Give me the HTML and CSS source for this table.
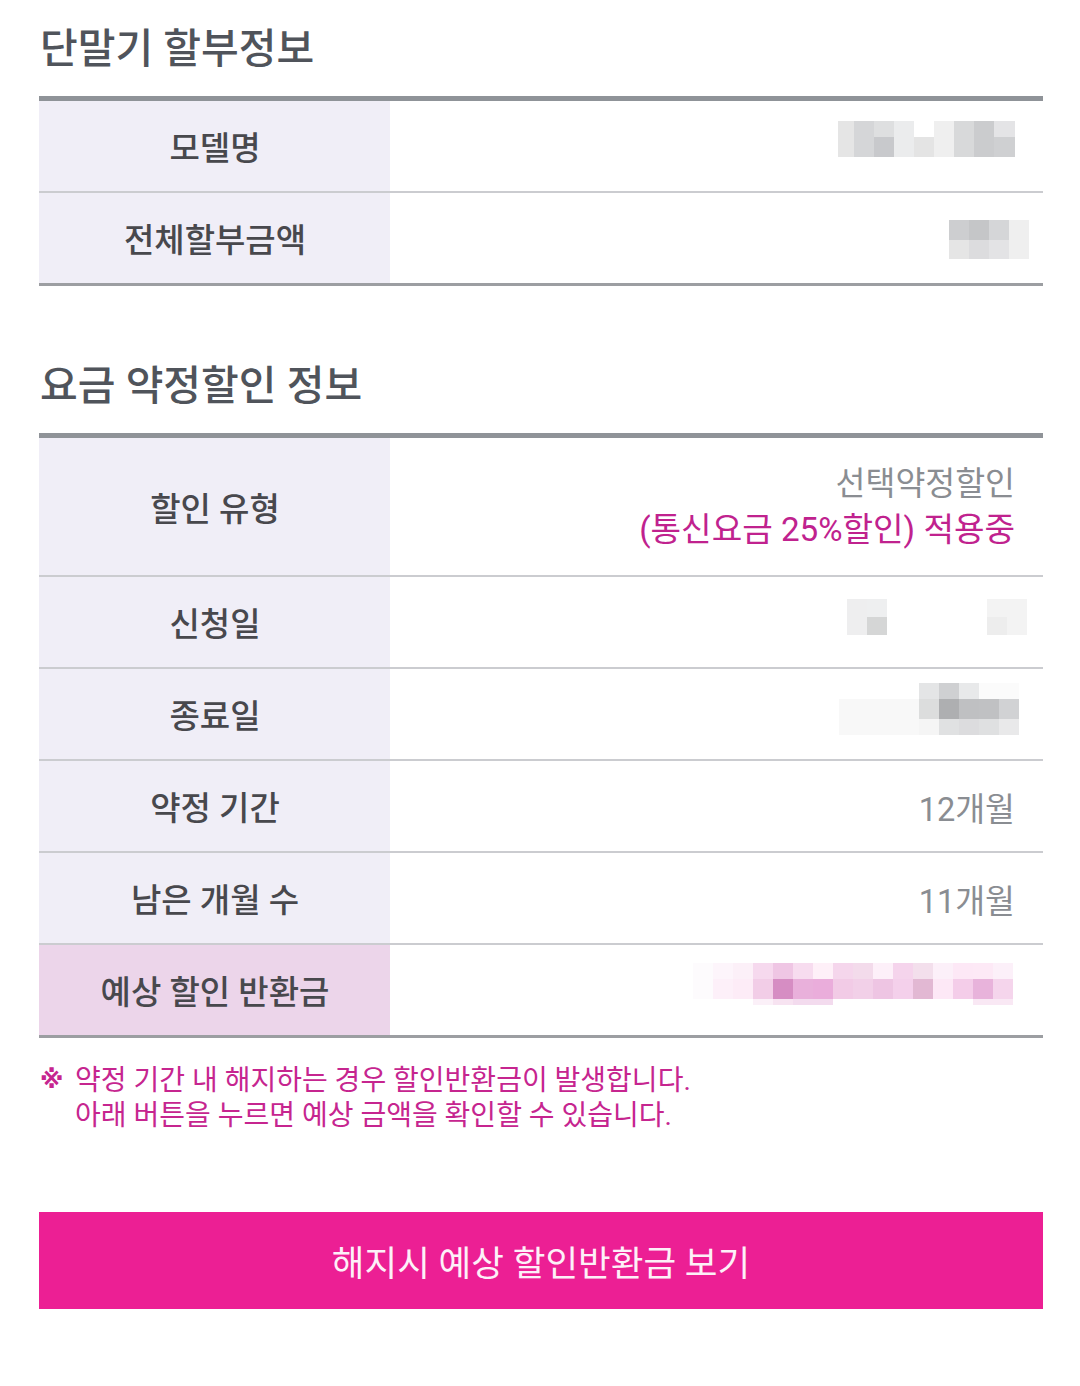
FILE: index.html
```html
<!DOCTYPE html>
<html lang="ko">
<head>
<meta charset="utf-8">
<title>약정 정보</title>
<link rel="stylesheet" href="styles.css">
</head>
<body>
<main class="page">
  <section class="section">
    <h2 class="section-title">단말기 할부정보</h2>
    <div class="info-table">
      <div class="row">
        <div class="label">모델명</div>
        <div class="value value--blob">
          <svg class="blob" width="205" height="90" viewBox="0 0 205 90" shape-rendering="crispEdges" aria-hidden="true">
            <rect x="0" y="20" width="16" height="36" fill="#e5e5e5"/>
            <rect x="16" y="20" width="20" height="36" fill="#d5d6d8"/>
            <rect x="36" y="20" width="20" height="16" fill="#dedfe0"/>
            <rect x="36" y="36" width="20" height="20" fill="#c8c9cc"/>
            <rect x="56" y="20" width="20" height="36" fill="#ebeced"/>
            <rect x="76" y="36" width="20" height="20" fill="#e4e4e4"/>
            <rect x="96" y="20" width="20" height="36" fill="#efefef"/>
            <rect x="116" y="20" width="20" height="36" fill="#d8d9da"/>
            <rect x="136" y="20" width="20" height="36" fill="#cbccce"/>
            <rect x="156" y="20" width="21" height="16" fill="#e4e4e6"/>
            <rect x="156" y="36" width="21" height="20" fill="#cfd0d2"/>
          </svg>
        </div>
      </div>
      <div class="row">
        <div class="label">전체할부금액</div>
        <div class="value value--blob">
          <svg class="blob" width="94" height="90" viewBox="0 0 94 90" shape-rendering="crispEdges" aria-hidden="true">
            <rect x="0" y="27" width="20" height="20" fill="#cdced0"/>
            <rect x="20" y="27" width="20" height="20" fill="#c5c6c8"/>
            <rect x="40" y="27" width="20" height="20" fill="#d5d6d8"/>
            <rect x="60" y="27" width="20" height="39" fill="#efefef"/>
            <rect x="0" y="47" width="20" height="19" fill="#e5e5e5"/>
            <rect x="20" y="47" width="20" height="19" fill="#dcdcde"/>
            <rect x="40" y="47" width="20" height="19" fill="#e3e3e5"/>
          </svg>
        </div>
      </div>
    </div>
  </section>

  <section class="section section--second">
    <h2 class="section-title">요금 약정할인 정보</h2>
    <div class="info-table">
      <div class="row row--tall">
        <div class="label">할인 유형</div>
        <div class="value">
          <div class="value-lines">
            <span>선택약정할인</span>
            <span class="accent">(통신요금 25%할인) 적용중</span>
          </div>
        </div>
      </div>
      <div class="row">
        <div class="label">신청일</div>
        <div class="value value--blob">
          <svg class="blob" width="196" height="90" viewBox="0 0 196 90" shape-rendering="crispEdges" aria-hidden="true">
            <rect x="0" y="22" width="20" height="36" fill="#eeeeef"/>
            <rect x="20" y="22" width="20" height="18" fill="#eeeff0"/>
            <rect x="20" y="40" width="20" height="18" fill="#d5d6d6"/>
            <rect x="140" y="22" width="40" height="36" fill="#f3f3f3"/>
            <rect x="140" y="40" width="20" height="18" fill="#ededed"/>
          </svg>
        </div>
      </div>
      <div class="row">
        <div class="label">종료일</div>
        <div class="value value--blob">
          <svg class="blob" width="204" height="90" viewBox="0 0 204 90" shape-rendering="crispEdges" aria-hidden="true">
            <rect x="80" y="14" width="20" height="16" fill="#e4e5e6"/>
            <rect x="100" y="14" width="20" height="16" fill="#cfd0d2"/>
            <rect x="120" y="14" width="20" height="16" fill="#e8e9ea"/>
            <rect x="140" y="14" width="40" height="16" fill="#fbfbfb"/>
            <rect x="0" y="30" width="80" height="36" fill="#f8f8f8"/>
            <rect x="80" y="30" width="20" height="20" fill="#dcdddd"/>
            <rect x="100" y="30" width="20" height="20" fill="#aeafb1"/>
            <rect x="120" y="30" width="20" height="20" fill="#bfc0c2"/>
            <rect x="140" y="30" width="20" height="20" fill="#c0c1c3"/>
            <rect x="160" y="30" width="20" height="20" fill="#d1d2d4"/>
            <rect x="80" y="50" width="20" height="16" fill="#f5f5f5"/>
            <rect x="100" y="50" width="20" height="16" fill="#e0e1e2"/>
            <rect x="120" y="50" width="20" height="16" fill="#dcdcde"/>
            <rect x="140" y="50" width="20" height="16" fill="#dfe0e1"/>
            <rect x="160" y="50" width="20" height="16" fill="#e9e9ea"/>
          </svg>
        </div>
      </div>
      <div class="row">
        <div class="label">약정 기간</div>
        <div class="value">12개월</div>
      </div>
      <div class="row">
        <div class="label">남은 개월 수</div>
        <div class="value">11개월</div>
      </div>
      <div class="row row--highlight">
        <div class="label">예상 할인 반환금</div>
        <div class="value value--blob">
          <svg class="blob" width="350" height="90" viewBox="0 0 350 90" shape-rendering="crispEdges" aria-hidden="true">
            <rect x="0" y="18" width="20" height="16" fill="#fdfbfd"/>
            <rect x="20" y="18" width="20" height="16" fill="#fdf5fb"/>
            <rect x="40" y="18" width="20" height="16" fill="#fcf0f8"/>
            <rect x="60" y="18" width="20" height="16" fill="#f6d9ee"/>
            <rect x="80" y="18" width="20" height="16" fill="#efc6e4"/>
            <rect x="100" y="18" width="20" height="16" fill="#f7dcef"/>
            <rect x="120" y="18" width="20" height="16" fill="#fef0f8"/>
            <rect x="140" y="18" width="20" height="16" fill="#f5d6ec"/>
            <rect x="160" y="18" width="20" height="16" fill="#f3dbeb"/>
            <rect x="180" y="18" width="20" height="16" fill="#fdf0f9"/>
            <rect x="200" y="18" width="20" height="16" fill="#f5d4ec"/>
            <rect x="220" y="18" width="20" height="16" fill="#f3dfec"/>
            <rect x="240" y="18" width="20" height="16" fill="#fcf0f9"/>
            <rect x="260" y="18" width="20" height="16" fill="#fde8f6"/>
            <rect x="280" y="18" width="20" height="16" fill="#fde9f6"/>
            <rect x="300" y="18" width="20" height="16" fill="#fcf0f9"/>
            <rect x="0" y="34" width="20" height="20" fill="#fdfbfd"/>
            <rect x="20" y="34" width="20" height="20" fill="#fdf0f9"/>
            <rect x="40" y="34" width="20" height="20" fill="#fdecf7"/>
            <rect x="60" y="34" width="20" height="20" fill="#f2cde7"/>
            <rect x="80" y="34" width="20" height="20" fill="#d68dc3"/>
            <rect x="100" y="34" width="20" height="20" fill="#e9b0db"/>
            <rect x="120" y="34" width="20" height="20" fill="#eaaddb"/>
            <rect x="140" y="34" width="20" height="20" fill="#f2cbe6"/>
            <rect x="160" y="34" width="20" height="20" fill="#f2d0e8"/>
            <rect x="180" y="34" width="20" height="20" fill="#eec5e3"/>
            <rect x="200" y="34" width="20" height="20" fill="#f4d0eb"/>
            <rect x="220" y="34" width="20" height="20" fill="#e2b8d3"/>
            <rect x="240" y="34" width="20" height="20" fill="#fde8f6"/>
            <rect x="260" y="34" width="20" height="20" fill="#f4cde9"/>
            <rect x="280" y="34" width="20" height="20" fill="#e8b3db"/>
            <rect x="300" y="34" width="20" height="20" fill="#f5d5ec"/>
            <rect x="60" y="54" width="20" height="6" fill="#fbf0f8"/>
            <rect x="80" y="54" width="20" height="6" fill="#f7e3f1"/>
            <rect x="100" y="54" width="40" height="6" fill="#f3dbee"/>
            <rect x="280" y="54" width="40" height="6" fill="#f9e8f4"/>
          </svg>
        </div>
      </div>
    </div>
  </section>

  <div class="notice">
    <span class="notice-mark">※</span>
    <p class="notice-text">약정 기간 내 해지하는 경우 할인반환금이 발생합니다.<br>아래 버튼을 누르면 예상 금액을 확인할 수 있습니다.</p>
  </div>

  <button class="cta" type="button">해지시 예상 할인반환금 보기</button>
</main>
</body>
</html>
```

FILE: styles.css
```css
* {
  box-sizing: border-box;
}

html, body {
  margin: 0;
  padding: 0;
  background: #ffffff;
}

body {
  font-family: Roboto, "Noto Sans CJK KR", sans-serif;
  color: #4a4a4f;
}

.page {
  width: 1080px;
  padding: 25px 37px 60px 39px;
  display: flex;
  flex-direction: column;
}

.section-title {
  margin: 0 0 23px;
  font-size: 41px;
  line-height: 48px;
  font-weight: 500;
  color: #50545b;
  padding-left: 1px;
}

.section--second {
  margin-top: 76px;
}

.info-table {
  border-top: 5px solid #8f9398;
  border-bottom: 3px solid #9c9ea2;
}

.row {
  display: grid;
  grid-template-columns: 351px 1fr;
  height: 90px;
}

.row + .row {
  border-top: 2px solid #cbccd0;
  height: 92px;
}

.row--tall {
  height: 137px;
}

.label {
  background: #f0eef7;
  display: flex;
  align-items: center;
  justify-content: center;
  font-size: 33px;
  font-weight: 500;
  color: #48484d;
  padding-left: 1px;
}

.row--highlight .label {
  background: #ecd5ea;
}

.value {
  display: flex;
  align-items: center;
  justify-content: flex-end;
  padding-right: 28px;
  font-size: 32.5px;
  color: #8a8d92;
  text-align: right;
}

.value--blob {
  padding-right: 0;
  align-items: flex-start;
}

.blob {
  display: block;
}

.value-lines {
  display: flex;
  flex-direction: column;
  align-items: flex-end;
  line-height: 46px;
}

.accent {
  color: #c0228e;
  font-size: 33.2px;
}

.notice {
  display: flex;
  margin-top: 25px;
  color: #c6258f;
  font-size: 28px;
  line-height: 35px;
}

.notice-mark {
  width: 36px;
  flex: none;
  font-family: "DejaVu Sans", sans-serif;
  font-weight: 700;
  font-size: 24px;
  padding-left: 1px;
}

.notice-text {
  margin: 0;
}

.cta {
  margin-top: 79px;
  height: 97px;
  width: 100%;
  border: none;
  background: #ec1f94;
  color: #fdf0f8;
  font-family: Roboto, "Noto Sans CJK KR", sans-serif;
  font-size: 35.5px;
  font-weight: 400;
  padding: 0;
}
```
